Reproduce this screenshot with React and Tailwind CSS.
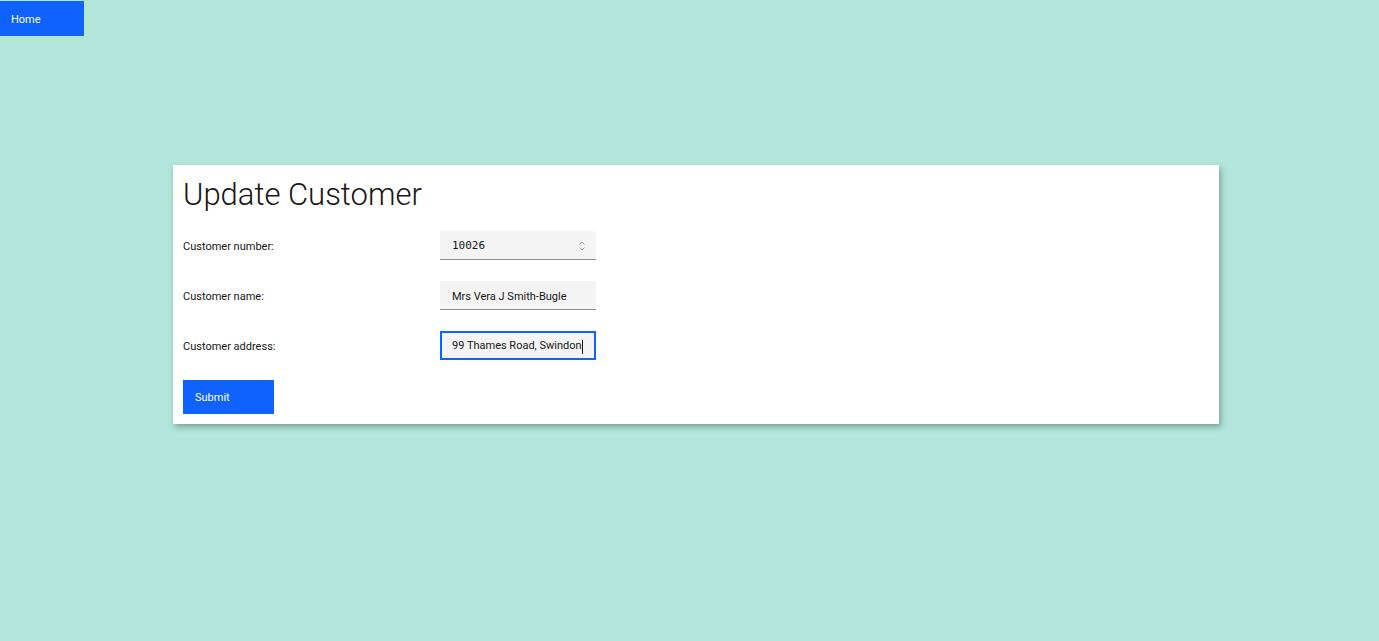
import React, { useState } from "react";

const SpinIcon = () => (
  <svg width="10" height="12" viewBox="0 0 10 12" fill="none" stroke="#a8a8a8" strokeWidth="1">
    <path d="M2.5 4.5 L5 2 L7.5 4.5" />
    <path d="M2.5 7.5 L5 10 L7.5 7.5" />
  </svg>
);

const Field = ({ label, children }) => (
  <div className="flex items-center h-[29px]">
    <label className="w-[257px] pt-[3px] text-[11px] text-[#161616]">{label}</label>
    {children}
  </div>
);

const App = () => {
  const [number, setNumber] = useState("10026");
  const [name, setName] = useState("Mrs Vera J Smith-Bugle");
  const [address, setAddress] = useState("99 Thames Road, Swindon");

  return (
    <div
      className="min-h-[641px] bg-[#b2e6da] pt-px"
      style={{ fontFamily: 'Roboto, "Noto Sans", sans-serif' }}
    >
      <nav>
        <button className="h-[35px] w-[84px] bg-[#0f62fe] pt-[3px] text-left pl-[11px] text-[11px] text-white">
          Home
        </button>
      </nav>

      <div className="mx-[173px] mt-[129px] w-[1046px] bg-white pl-[10px] pt-[10px] pb-[10px] shadow-[2px_3px_6px_rgba(0,0,0,0.3)]">
        <h1 className="text-[31px] font-light leading-[40px] text-[#161616]">
          Update Customer
        </h1>

        <div className="mt-[16px] flex flex-col gap-[21px]">
          <Field label="Customer number:">
            <div className="flex h-[29px] w-[156px] items-center justify-between border-b border-[#8d8d8d] bg-[#f4f4f4] pl-[12px] pr-[9px] pt-[2px]">
              <input
                value={number}
                onChange={(e) => setNumber(e.target.value)}
                className="w-[100px] bg-transparent text-[11px] text-[#161616] outline-none"
                style={{ fontFamily: '"DejaVu Sans Mono", monospace' }}
              />
              <SpinIcon />
            </div>
          </Field>

          <Field label="Customer name:">
            <input
              value={name}
              onChange={(e) => setName(e.target.value)}
              className="h-[29px] w-[156px] border-b border-[#8d8d8d] bg-[#f4f4f4] px-[12px] pt-[2px] text-[11px] text-[#161616] outline-none"
            />
          </Field>

          <Field label="Customer address:">
            <div className="flex h-[29px] w-[156px] items-center border-2 border-[#0f62fe] bg-[#f4f4f4] px-[10px] pt-[2px] text-[11px] text-[#161616]">
              <span className="whitespace-nowrap">{address}</span>
              <span className="h-[14px] w-px bg-[#161616]" />
            </div>
          </Field>
        </div>

        <button
          onClick={() => setAddress(address)}
          className="mt-[20px] h-[34px] w-[91px] bg-[#0f62fe] pl-[12px] pt-[2px] text-left text-[11px] text-white"
        >
          Submit
        </button>
      </div>
    </div>
  );
};

export default App;
